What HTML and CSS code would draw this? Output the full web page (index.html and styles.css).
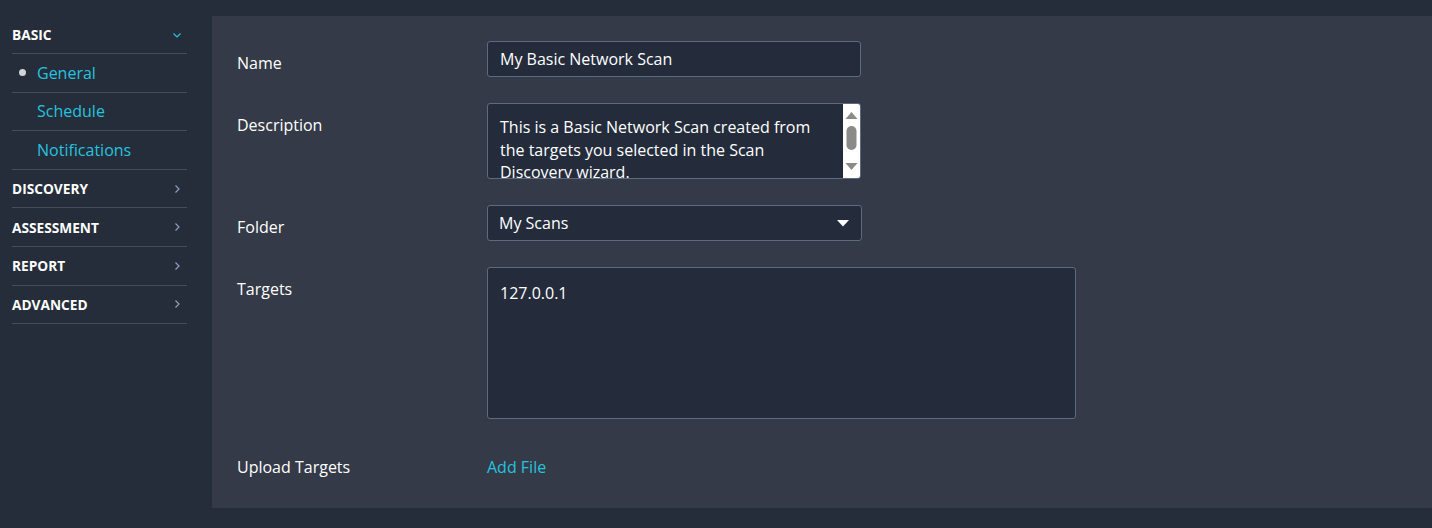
FILE: index.html
```html
<!DOCTYPE html>
<html>
<head>
<meta charset="utf-8">
<link rel="stylesheet" href="styles.css">
</head>
<body>
<div class="page">
  <nav class="sidebar">
    <div class="sec open">
      <span>BASIC</span>
      <svg class="chev" width="10" height="8" viewBox="0 0 10 8"><path d="M1.5 2.5 L5 6 L8.5 2.5" fill="none" stroke="#26c3df" stroke-width="1.2"/></svg>
    </div>
    <div class="item active"><span class="dot"></span>General</div>
    <div class="item">Schedule</div>
    <div class="item">Notifications</div>
    <div class="sec">
      <span>DISCOVERY</span>
      <svg class="chev" width="10" height="10" viewBox="0 0 10 10"><path d="M3.5 1.5 L7 5 L3.5 8.5" fill="none" stroke="#8ea0bd" stroke-width="1.2"/></svg>
    </div>
    <div class="sec">
      <span>ASSESSMENT</span>
      <svg class="chev" width="10" height="10" viewBox="0 0 10 10"><path d="M3.5 1.5 L7 5 L3.5 8.5" fill="none" stroke="#8ea0bd" stroke-width="1.2"/></svg>
    </div>
    <div class="sec">
      <span>REPORT</span>
      <svg class="chev" width="10" height="10" viewBox="0 0 10 10"><path d="M3.5 1.5 L7 5 L3.5 8.5" fill="none" stroke="#8ea0bd" stroke-width="1.2"/></svg>
    </div>
    <div class="sec">
      <span>ADVANCED</span>
      <svg class="chev" width="10" height="10" viewBox="0 0 10 10"><path d="M3.5 1.5 L7 5 L3.5 8.5" fill="none" stroke="#8ea0bd" stroke-width="1.2"/></svg>
    </div>
  </nav>
  <main class="panel">
    <div class="form">
      <div class="label">Name</div>
      <div class="field input">My Basic Network Scan</div>

      <div class="label">Description</div>
      <div class="field textarea desc">
        <div class="desc-text">This is a Basic Network Scan created from the targets you selected in the Scan Discovery wizard.</div>
        <div class="scrollbar">
          <svg width="17" height="74" viewBox="0 0 17 74">
            <path d="M2.5 15 L8.5 8 L14.5 15 Z" fill="#8a8a8a"/>
            <rect x="3.5" y="22" width="10" height="24" rx="5" fill="#8a8a8a"/>
            <path d="M2.5 59 L8.5 66 L14.5 59 Z" fill="#8a8a8a"/>
          </svg>
        </div>
      </div>

      <div class="label">Folder</div>
      <div class="field input select">
        <span>My Scans</span>
        <svg width="12" height="7" viewBox="0 0 12 7"><path d="M0 0 L12 0 L6 6.5 Z" fill="#ffffff"/></svg>
      </div>

      <div class="label">Targets</div>
      <div class="field textarea targets">127.0.0.1</div>

      <div class="label">Upload Targets</div>
      <div class="link">Add File</div>
    </div>
  </main>
</div>
</body>
</html>
```

FILE: styles.css
```css
* { box-sizing: border-box; }
html, body { margin: 0; padding: 0; }
body {
  background: #252d3b;
  font-family: "Open Sans", "Noto Sans", sans-serif;
  color: #ffffff;
  width: 1432px;
  height: 528px;
  overflow: hidden;
}
.page {
  display: flex;
  align-items: flex-start;
  gap: 25px;
  padding: 16px 0 0 12px;
}
.sidebar {
  width: 175px;
  flex: none;
  display: flex;
  flex-direction: column;
}
.sec, .item {
  height: 38.6px;
  border-bottom: 1px solid #464d5a;
  display: flex;
  align-items: center;
}
.sec:first-child { height: 38px; }
.sec {
  justify-content: space-between;
  font-size: 13.7px;
  font-weight: 700;
  color: #ffffff;
  padding-right: 5px;
}
.item {
  font-size: 16px;
  color: #26c3df;
  padding-left: 25px;
  position: relative;
}
.dot {
  position: absolute;
  left: 7px;
  top: 50%;
  width: 7px;
  height: 7px;
  margin-top: -4px;
  border-radius: 50%;
  background: #d0d3d8;
}
.panel {
  flex: 1;
  background: #343a47;
  height: 492px;
  padding: 25px 25px 0 25px;
}
.form {
  display: grid;
  grid-template-columns: 250px auto;
  row-gap: 26px;
  justify-content: start;
}
.label {
  font-size: 16px;
  line-height: 22px;
  padding-top: 11px;
  color: #ffffff;
}
.field {
  background: #242c3b;
  border: 1px solid #5d6b82;
  border-radius: 3px;
  font-size: 16px;
  color: #ffffff;
}
.input {
  width: 374px;
  height: 36px;
  padding: 0 12px;
  display: flex;
  align-items: center;
}
.select {
  width: 375px;
  justify-content: space-between;
  padding: 0 12px 0 11px;
}
.textarea {
  line-height: 22.5px;
}
.desc {
  width: 374px;
  height: 76px;
  display: flex;
  overflow: hidden;
}
.desc-text {
  flex: 1;
  padding: 12px 12px 0 12px;
}
.scrollbar {
  width: 17px;
  flex: none;
  background: #ffffff;
  height: 74px;
}
.scrollbar svg { display: block; }
.targets {
  width: 589px;
  height: 152px;
  padding: 14px 12px;
}
.link {
  font-size: 16px;
  line-height: 22px;
  padding-top: 11px;
  color: #26c3df;
}
```
